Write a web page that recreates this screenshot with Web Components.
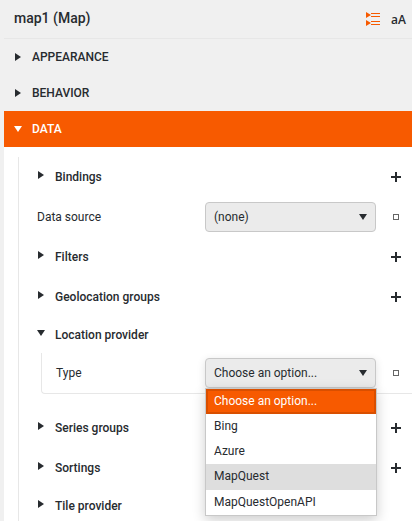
<!DOCTYPE html>
<html lang="en">
<head>
<meta charset="utf-8">
<title>map1 (Map)</title>
<style>
html,body{margin:0;height:521px;overflow:hidden;background:#f0f0f0}
body{font:12px/16px Roboto,"Liberation Sans",sans-serif;color:#272b2f}
</style>
</head>
<body>
<property-panel heading="map1 (Map)">
  <panel-category label="APPEARANCE"></panel-category>
  <panel-category label="BEHAVIOR"></panel-category>
  <panel-category label="DATA" open>
    <property-group label="Bindings" add></property-group>
    <property-row label="Data source"><drop-down value="(none)"></drop-down></property-row>
    <property-group label="Filters" add></property-group>
    <property-group label="Geolocation groups" add></property-group>
    <property-group label="Location provider" open>
      <property-row label="Type" nested>
        <drop-down value="Choose an option..." open>
          <drop-option selected>Choose an option...</drop-option>
          <drop-option>Bing</drop-option>
          <drop-option>Azure</drop-option>
          <drop-option hovered>MapQuest</drop-option>
          <drop-option>MapQuestOpenAPI</drop-option>
        </drop-down>
      </property-row>
    </property-group>
    <property-group label="Series groups" add></property-group>
    <property-group label="Sortings" add></property-group>
    <property-group label="Tile provider"></property-group>
  </panel-category>
</property-panel>
<script>
class Base extends HTMLElement {
  connectedCallback() {
    if (this.shadowRoot) return;
    this.attachShadow({mode: 'open'}).innerHTML = this.render();
  }
  attr(name) { return this.getAttribute(name) || ''; }
}

const arrow = open => open
  ? '<svg width="8" height="6" viewBox="0 0 8 6"><path d="M0 0H8L4 6Z" fill="currentColor"/></svg>'
  : '<svg width="6" height="8" viewBox="0 0 6 8"><path d="M0 0L6 4L0 8Z" fill="currentColor"/></svg>';

customElements.define('property-panel', class extends Base {
  render() {
    return `<style>
      :host{display:block;margin-left:4px}
      header{box-sizing:border-box;height:39px;border-bottom:1px solid #e7e7e7;display:flex;align-items:center;padding:0 6px 2px 10px}
      h1{flex:1;margin:0;font-size:14px;line-height:18px;font-weight:500}
      svg{display:block;margin:2px 11px 0 0}
      b{font:600 12px/16px "Open Sans","Noto Sans",sans-serif;margin-top:3px;width:15px;text-align:right}
    </style>
    <header><h1>${this.attr('heading')}</h1>
      <svg width="14" height="14" viewBox="0 0 14 14" fill="#f75a00">
        <path d="M0 0L5 3L0 6ZM0 8L5 11L0 14ZM5 1H14V2H5ZM5 4H14V5H5ZM5 9H14V10H5ZM5 12H14V13H5Z"/>
      </svg>
      <b>aA</b></header>
    <slot></slot>`;
  }
});

customElements.define('panel-category', class extends Base {
  render() {
    const open = this.hasAttribute('open');
    return `<style>
      :host{display:block}
      .bar{height:36px;display:flex;align-items:center;padding-left:10px;font-weight:500}
      .mark{width:18px;display:flex}
      .mark svg{margin-left:1px}
      :host([open]) .mark svg{margin-left:0}
      :host([open]) .bar{background:#f75a00;color:#fff}
      .body{background:#fff;padding:10px 0 0 14px}
      .list{border-left:1px solid #e7e7e7;min-height:364px}
    </style>
    <div class="bar"><span class="mark">${arrow(open)}</span>${this.attr('label')}</div>
    ${open ? '<div class="body"><div class="list"><slot></slot></div></div>' : ''}`;
  }
});

customElements.define('property-group', class extends Base {
  render() {
    const open = this.hasAttribute('open');
    return `<style>
      :host{display:block}
      .bar{height:36px;display:flex;align-items:center;padding:0 10px 0 18px;font-weight:500}
      :host([add]) .bar{height:40px}
      .mark{width:18px;display:flex;margin-bottom:4px}
      .mark svg{margin-left:1px}
      :host([open]) .mark svg{margin-left:0}
      .label{flex:1}
      .plus{display:block;width:12px;height:12px}
      .nested{box-sizing:border-box;height:41px;margin:0 0 14px 22px;border:solid #e7e7e7;border-width:0 0 1px 1px;border-bottom-left-radius:4px}
    </style>
    <div class="bar"><span class="mark">${arrow(open)}</span><span class="label">${this.attr('label')}</span>
    ${this.hasAttribute('add') ? '<svg class="plus" viewBox="0 0 12 12"><path d="M1 5H5V1H7V5H11V7H7V11H5V7H1Z" fill="#272b2f"/></svg>' : ''}</div>
    ${open ? '<div class="nested"><slot></slot></div>' : ''}`;
  }
});

customElements.define('property-row', class extends Base {
  render() {
    return `<style>
      :host{display:flex;height:40px;align-items:center;padding:0 13px 0 18px}
      :host([nested]){padding-left:14px}
      .label{flex:1}
      i{box-sizing:border-box;width:6px;height:6px;border:1px solid #666;margin-left:17px}
    </style>
    <span class="label">${this.attr('label')}</span><slot></slot><i></i>`;
  }
});

customElements.define('drop-down', class extends Base {
  render() {
    const open = this.hasAttribute('open');
    return `<style>
      :host{display:block;position:relative;width:171px;height:30px}
      .field{box-sizing:border-box;height:30px;border:1px solid #c8c8c8;border-radius:4px;background:#ebebeb;display:flex;align-items:center;justify-content:space-between;padding:0 8px}
      :host([open]) .field{box-shadow:0 2px 8px rgba(0,0,0,.12)}
      .menu{position:absolute;z-index:2;left:0;top:30px;box-sizing:border-box;width:172px;border:1px solid #c8c8c8;background:#fff;box-shadow:0 4px 12px rgba(0,0,0,.2)}
    </style>
    <div class="field"><span>${this.attr('value')}</span>${arrow(true)}</div>
    ${open ? '<div class="menu"><slot></slot></div>' : ''}`;
  }
});

customElements.define('drop-option', class extends Base {
  render() {
    return `<style>
      :host{display:flex;box-sizing:border-box;height:25px;align-items:center;padding:0 0 2px 8px}
      :host([selected]){background:#f75a00;color:#fff;box-shadow:inset 0 0 0 2px #d94f00}
      :host([hovered]){background:#dedede;height:26px}
    </style><slot></slot>`;
  }
});
</script>
</body>
</html>
